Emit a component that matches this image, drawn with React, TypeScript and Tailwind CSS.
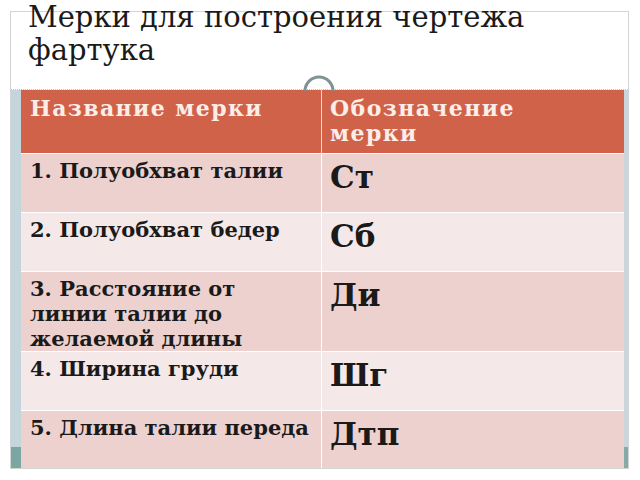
const rows = [
  { name: "1. Полуобхват талии", code: "Ст", h: "h-[58px]", bg: "bg-[#ecd1cf]" },
  { name: "2. Полуобхват бедер", code: "Сб", h: "h-[58px]", bg: "bg-[#f5e8e8]" },
  { name: "3. Расстояние от линии талии до желаемой длины", code: "Ди", h: "h-[79px]", bg: "bg-[#ecd1cf]" },
  { name: "4. Ширина груди", code: "Шг", h: "h-[58px]", bg: "bg-[#f5e8e8]" },
  { name: "5. Длина талии переда", code: "Дтп", h: "h-[57px]", bg: "bg-[#ecd1cf]" },
];

export default function App() {
  return (
    <div
      className="w-[640px] h-[480px] bg-white pt-[11px] pl-[10px] overflow-hidden"
      style={{ fontFamily: '"DejaVu Serif", "Liberation Serif", serif' }}
    >
      <div className="w-[619px] border border-[#d4d4d4] flex flex-col">
        {/* title */}
        <div className="relative h-[78px] border-b border-dotted border-[#c4c4c4]">
          <h1 className="-mt-[11px] ml-[17px] text-[29px] leading-[33px] text-[#1a1a1a] font-normal">
            Мерки для построения чертежа фартука
          </h1>
          <svg className="absolute left-[291px] top-[59px]" width="34" height="20" viewBox="0 0 34 20">
            <path d="M3 20 A14 14 0 0 1 31 20" fill="none" stroke="#7f9294" strokeWidth="3" />
          </svg>
        </div>

        {/* body */}
        <div className="flex h-[378px]">
          <div className="w-[10px] flex flex-col">
            <div className="flex-1 bg-[#c4d5dc]" />
            <div className="h-[21px] bg-[#7ba7a3]" />
          </div>
          <div className="flex-1 flex flex-col gap-px bg-white">
            <div className="flex h-[63px] bg-[#d0624a] text-[#fbeee8] font-bold text-[22px] leading-[25px] tracking-[1.4px]">
              <div className="w-[300px] pl-[9px] pt-[6px]">Название мерки</div>
              <div className="w-px bg-[#f3d9d2]" />
              <div className="flex-1 pl-[8px] pt-[6px]">
                <div className="w-[200px]">Обозначение мерки</div>
              </div>
            </div>
            {rows.map((r) => (
              <div key={r.code} className={`flex ${r.h} ${r.bg} text-[#1a1a1a] font-bold`}>
                <div className="w-[300px] pl-[9px] pr-[6px] pt-[4px] text-[21px] leading-[25px]">{r.name}</div>
                <div className="w-px bg-white" />
                <div className="flex-1 pl-[8px] pt-[5px] text-[31px] leading-[36px]">{r.code}</div>
              </div>
            ))}
          </div>
          <div className="w-[4px] flex flex-col">
            <div className="flex-1 bg-[#c9d6dc]" />
            <div className="h-[21px] bg-[#86aaa8]" />
          </div>
        </div>
      </div>
    </div>
  );
}
